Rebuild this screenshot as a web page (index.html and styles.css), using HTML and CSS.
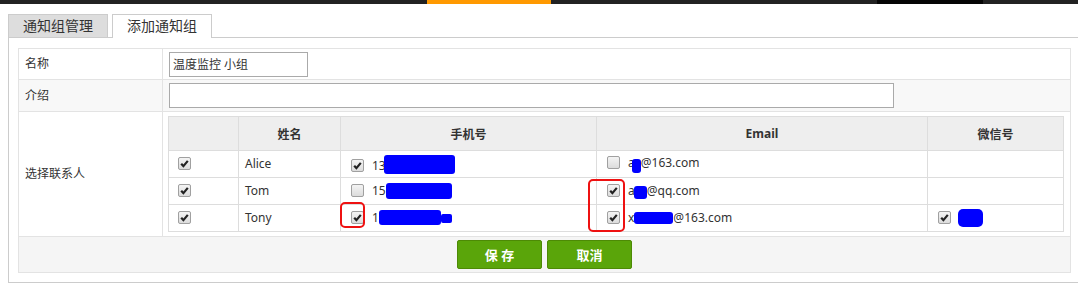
FILE: index.html
```html
<!DOCTYPE html>
<html lang="zh-CN">
<head>
  <meta charset="UTF-8" />
  <title>添加通知组</title>
  <link rel="stylesheet" href="styles.css">
</head>
<body>
  <div class="topbar">
    <span class="nav-active"></span>
    <span class="nav-dark"></span>
  </div>

  <div class="page">
    <ul class="tabs">
      <li class="tab">通知组管理</li>
      <li class="tab active">添加通知组</li>
    </ul>

    <div class="panel">
      <table class="form-table">
        <colgroup>
          <col class="col-label">
          <col>
        </colgroup>
        <tr class="row-name">
          <td class="label">名称</td>
          <td><input class="input-name" type="text" value="温度监控 小组"></td>
        </tr>
        <tr class="row-intro">
          <td class="label">介绍</td>
          <td><input class="input-intro" type="text" value=""></td>
        </tr>
        <tr class="row-contacts">
          <td class="label">选择联系人</td>
          <td class="contacts-cell">
            <div class="contacts">
              <table class="contacts-table">
                <colgroup>
                  <col class="c-check">
                  <col class="c-name">
                  <col class="c-phone">
                  <col class="c-email">
                  <col>
                </colgroup>
                <thead>
                  <tr>
                    <th></th>
                    <th>姓名</th>
                    <th>手机号</th>
                    <th>Email</th>
                    <th>微信号</th>
                  </tr>
                </thead>
                <tbody>
                  <tr>
                    <td class="first"><span class="cb on"><svg viewBox="0 0 13 13"><path d="M2.6 6.8 L5.2 9.6 L10.4 3.4" /></svg></span></td>
                    <td>Alice</td>
                    <td><span class="cb on"><svg viewBox="0 0 13 13"><path d="M2.6 6.8 L5.2 9.6 L10.4 3.4" /></svg></span>13<span class="mask m-p1"></span></td>
                    <td><span class="cb"></span>a<span class="mask m-e1"></span>@163.com</td>
                    <td></td>
                  </tr>
                  <tr>
                    <td class="first"><span class="cb on"><svg viewBox="0 0 13 13"><path d="M2.6 6.8 L5.2 9.6 L10.4 3.4" /></svg></span></td>
                    <td>Tom</td>
                    <td><span class="cb"></span>15<span class="mask m-p2"></span></td>
                    <td><span class="cb on"><svg viewBox="0 0 13 13"><path d="M2.6 6.8 L5.2 9.6 L10.4 3.4" /></svg></span>a<span class="mask m-e2"></span>@qq.com</td>
                    <td></td>
                  </tr>
                  <tr>
                    <td class="first"><span class="cb on"><svg viewBox="0 0 13 13"><path d="M2.6 6.8 L5.2 9.6 L10.4 3.4" /></svg></span></td>
                    <td>Tony</td>
                    <td><span class="cb on"><svg viewBox="0 0 13 13"><path d="M2.6 6.8 L5.2 9.6 L10.4 3.4" /></svg></span>1<span class="mask m-p3"></span><span class="mask m-p3b"></span></td>
                    <td><span class="cb on"><svg viewBox="0 0 13 13"><path d="M2.6 6.8 L5.2 9.6 L10.4 3.4" /></svg></span>x<span class="mask m-e3"></span>@163.com</td>
                    <td><span class="cb on"><svg viewBox="0 0 13 13"><path d="M2.6 6.8 L5.2 9.6 L10.4 3.4" /></svg></span><span class="mask m-w3"></span></td>
                  </tr>
                </tbody>
              </table>
              <!-- red annotation frames -->
              <span class="mark mark-phone"></span>
              <span class="mark mark-email"></span>
            </div>
          </td>
        </tr>
        <tr class="row-actions">
          <td colspan="2">
            <div class="actions">
              <button class="btn">保 存</button>
              <button class="btn">取消</button>
            </div>
          </td>
        </tr>
      </table>
    </div>
  </div>
</body>
</html>
```

FILE: styles.css
```css
* {
  margin: 0;
  padding: 0;
  box-sizing: border-box;
}

body {
  background: #ffffff;
  color: #333333;
  font-family: "Noto Sans", "Noto Sans CJK SC", sans-serif;
  font-size: 12px;
  overflow: hidden;
}

.topbar {
  display: flex;
  height: 4px;
  background: #222222;
}

.nav-active {
  margin-left: 427px;
  width: 124px;
  background: #ff9900;
}

.nav-dark {
  margin-left: 326px;
  width: 106px;
  background: #050505;
}

.page {
  padding: 10px 0 0 8px;
  margin-right: -3px;
}

.tabs {
  display: flex;
  gap: 4px;
  list-style: none;
}

.tab {
  height: 23px;
  padding: 0 14px;
  border: 1px solid #cccccc;
  border-bottom: none;
  background: #dddddd;
  font-size: 14px;
  line-height: 22px;
  color: #333333;
}

.tab.active {
  background: #ffffff;
  height: 24px;
  margin-bottom: -1px;
  position: relative;
}

.panel {
  border: 1px solid #cccccc;
  padding: 10px 9px 9px;
}

.form-table {
  width: 100%;
  border-collapse: collapse;
  border: 1px solid #e0e0e0;
}

.form-table > tbody > tr > td {
  border: 1px solid #e3e3e3;
  padding: 0 6px;
  vertical-align: middle;
}

.col-label {
  width: 144px;
}

.row-name {
  height: 31px;
}

.row-intro {
  height: 32px;
  background: #f8f8f8;
}

.row-actions {
  background: #f5f5f5;
}

.form-table .label {
  line-height: 16px;
}

input {
  height: 25px;
  border: 1px solid #aaaaaa;
  padding: 0 3px;
  font-family: "Noto Sans", "Noto Sans CJK SC", sans-serif;
  font-size: 12px;
  color: #333333;
  background: #ffffff;
  vertical-align: middle;
}

.input-name {
  width: 139px;
}

.input-intro {
  width: 725px;
}

.form-table > tbody > tr > td.contacts-cell {
  padding: 4px 6px 4px 5px;
}

.contacts {
  position: relative;
}

.contacts-table {
  width: 100%;
  border-collapse: collapse;
  border: 1px solid #dddddd;
}

.c-check { width: 70px; }
.c-name { width: 102px; }
.c-phone { width: 256px; }
.c-email { width: 331px; }

.contacts-table th {
  height: 34px;
  background: #eeeeee;
  border: 1px solid #dddddd;
  font-weight: bold;
  text-align: center;
  color: #333333;
}

.contacts-table td {
  height: 27px;
  border: 1px solid #dddddd;
  padding: 0 6px 0 10px;
  white-space: nowrap;
  line-height: 16px;
}

.contacts-table td.first {
  padding-left: 9px;
}

.contacts-table td:nth-child(2) {
  padding-left: 6px;
}

.cb {
  display: inline-block;
  width: 13px;
  height: 13px;
  margin-right: 8px;
  border: 1px solid #a0a0a0;
  border-radius: 2px;
  background: linear-gradient(#f4f4f4, #dcdcdc);
  vertical-align: -2px;
}

.cb svg {
  display: block;
  width: 11px;
  height: 11px;
}

.cb svg path {
  fill: none;
  stroke: #222222;
  stroke-width: 2.6;
}

.mask {
  display: inline-block;
  background: #0000ff;
  border-radius: 3px;
  vertical-align: middle;
}

.m-p1 { width: 71px; height: 19px; margin-left: -2px; vertical-align: -4px; }
.m-p2 { width: 66px; height: 16px; vertical-align: -4px; }
.m-p3 { width: 62px; height: 15px; vertical-align: -3px; }
.m-p3b { width: 11px; height: 9px; vertical-align: -1px; border-radius: 2px; }
.m-e1 { width: 9px; height: 14px; margin-left: -3px; vertical-align: -6px; }
.m-e2 { width: 13px; height: 13px; margin-left: -1px; vertical-align: -4px; }
.m-e3 { width: 39px; height: 12px; vertical-align: -2px; }
.m-w3 { width: 25px; height: 18px; margin-left: -1px; vertical-align: -5px; border-radius: 5px; }

.mark {
  position: absolute;
  border: 2px solid #ee1111;
  border-radius: 5px;
}

.mark-phone {
  left: 172px;
  top: 86px;
  width: 25px;
  height: 26px;
}

.mark-email {
  left: 420px;
  top: 63px;
  width: 37px;
  height: 53px;
}

.actions {
  display: flex;
  justify-content: center;
  gap: 5px;
  padding: 3px 0 3px;
}

.btn {
  width: 85px;
  height: 29px;
  border: 1px solid #4d8a05;
  border-radius: 2px;
  background: #5aa50a;
  color: #ffffff;
  font-family: "Noto Sans", "Noto Sans CJK SC", sans-serif;
  font-size: 13px;
  font-weight: bold;
  cursor: pointer;
}
```
